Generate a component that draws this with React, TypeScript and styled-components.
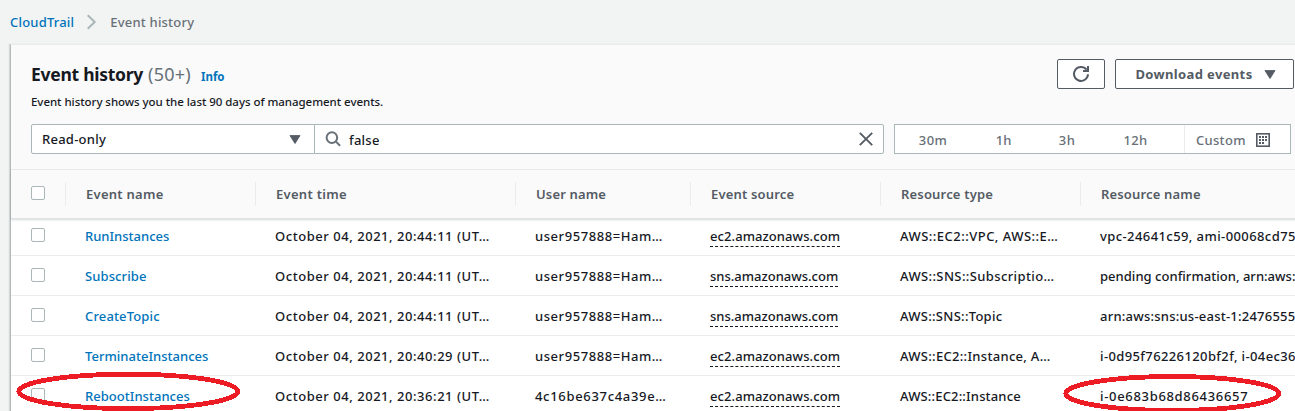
import React from "react";
import styled, { createGlobalStyle } from "styled-components";

const GlobalStyle = createGlobalStyle`
  *, *::before, *::after { box-sizing: border-box; }
  body {
    margin: 0;
    overflow: hidden;
    background: #f2f3f3;
    color: #16191f;
    font-family: "Noto Sans", "Open Sans", sans-serif;
    font-size: 13px;
    font-weight: 500;
  }
  button, input { font: inherit; color: inherit; }
`;

const Page = styled.div`
  position: relative;
  height: 411px;
  overflow: hidden;
  display: flex;
  flex-direction: column;
`;

/* Text with its own letter spacing */
const Text = styled.span<{ $track?: number }>`
  white-space: pre;
  letter-spacing: ${(p) => p.$track ?? 0}px;
`;

const Breadcrumbs = styled.nav`
  display: flex;
  align-items: center;
  height: 44px;
  padding: 0 0 1px 10px;
  color: #687078;
  flex: none;
  svg { margin: 0 13px 0 12px; }
`;

const Link = styled.a`
  color: #0073bb;
  text-decoration: none;
`;

const Panel = styled.main`
  flex: 1;
  margin-left: 10px;
  border-left: 1px solid #b4b9b9;
  border-top: 1px solid #eaeded;
  background: #fff;
  width: 1400px;
  box-shadow: -1px 0 1px rgba(0, 28, 36, 0.12);
`;

const PanelHeader = styled.header`
  height: 125px;
  padding: 14px 0 0 20px;
  background: #fafafa;
  border-bottom: 1px solid #eaeded;
`;

const TitleRow = styled.div`
  display: flex;
  width: 1263px;
  height: 35px;
`;

const Title = styled.h1`
  margin: 0;
  flex: 1;
  display: flex;
  align-items: baseline;
  font-size: 17.5px;
  line-height: 30px;
  font-weight: 700;
`;

const Count = styled.span`
  margin-left: 5px;
  font-size: 18px;
  font-weight: 400;
  letter-spacing: 0.25px;
  color: #687078;
`;

const Info = styled(Link)`
  margin-left: 10px;
  font-size: 11.5px;
  font-weight: 700;
`;

const Button = styled.button<{ $width: number }>`
  display: flex;
  align-items: center;
  justify-content: center;
  width: ${(p) => p.$width}px;
  height: 30px;
  margin-left: 10px;
  padding: 0;
  border: 1px solid #545b64;
  border-radius: 2px;
  background: #fff;
  color: #545b64;
  font-weight: 700;
  svg { flex: none; }
`;

const MenuButton = styled(Button)`
  gap: 11px;
  padding-left: 2px;
`;

const Description = styled.p`
  margin: 0;
  height: 30px;
  font-size: 11.5px;
  line-height: 15px;
`;

const Filters = styled.div`
  display: flex;
  height: 30px;
`;

const Field = styled.div<{ $width: number }>`
  display: flex;
  align-items: center;
  width: ${(p) => p.$width}px;
  border: 1px solid #aab7b8;
  background: #fff;
`;

const Select = styled(Field)`
  justify-content: space-between;
  padding: 0 13px 0 10px;
  border-radius: 2px 0 0 2px;
`;

const Search = styled(Field)`
  margin-left: -1px;
  padding: 0 10px 0 10px;
  border-radius: 0 2px 2px 0;
  svg { flex: none; }
`;

const SearchValue = styled(Text)`
  flex: 1;
  padding: 1px 0 0 8px;
`;

const Ranges = styled(Field)`
  margin-left: 10px;
  color: #687078;
  line-height: 28px;
`;

const Range = styled.div<{ $width: number }>`
  width: ${(p) => p.$width}px;
  padding-top: 1px;
  text-align: center;
`;

const Custom = styled.div`
  display: flex;
  align-items: center;
  gap: 10px;
  height: 28px;
  margin-left: 11px;
  padding: 1px 0 0 11px;
  border-left: 1px solid #eaeded;
`;

const columns = "54px 190px 260px 175px 190px 200px 310px";

const HeadRow = styled.div`
  position: relative;
  z-index: 1;
  display: grid;
  grid-template-columns: ${columns};
  align-items: center;
  height: 49px;
  background: #fafafa;
  border-bottom: 1px solid #dfe3e3;
  box-shadow: 0 1px 2px rgba(0, 28, 36, 0.16);
`;

const HeadCell = styled.div`
  height: 24px;
  padding-left: 20px;
  border-left: 1px solid #eaeded;
  color: #545b64;
  font-weight: 600;
  line-height: 24px;
`;

const Body = styled.div`
  margin-top: -3px;
`;

const Row = styled.div`
  display: grid;
  grid-template-columns: ${columns};
  align-items: center;
  height: 40px;
  border-bottom: 1px solid #eaeded;
`;

const Cell = styled.div`
  height: 21px;
  padding-left: 20px;
  line-height: 20px;
  padding-top: 1px;
`;

const HeadCheck = styled.div`
  padding: 0 0 2px 20px;
`;

const CheckCell = styled(HeadCheck)`
  padding-bottom: 1px;
`;

const Checkbox = styled.div`
  width: 14px;
  height: 14px;
  border: 1px solid #aab7b8;
  border-radius: 2px;
  background: #fff;
`;

const Source = styled(Text)`
  display: inline-block;
  height: 21px;
  line-height: 20px;
  border-bottom: 1px dashed #16191f;
  vertical-align: top;
`;

const Marks = styled.svg`
  position: absolute;
  inset: 0;
  z-index: 2;
  pointer-events: none;
`;

const Caret = () => (
  <svg width="12" height="9" viewBox="0 0 12 9">
    <path d="M1 .6h10L6 8.5z" fill="#545b64" stroke="#545b64" strokeWidth=".9" strokeLinejoin="round" />
  </svg>
);

const Crumb = () => (
  <svg width="11" height="16" viewBox="0 0 11 16" fill="none" stroke="#aab7b8" strokeWidth="2">
    <path d="M1.7 1.2 8.7 8l-7 6.8" />
  </svg>
);

const Refresh = () => (
  <svg width="18" height="18" viewBox="0 0 18 18" fill="none" stroke="#545b64" strokeWidth="2">
    <path d="M16 9.3A7 7 0 1 1 14.6 4.7" />
    <path d="M16 1v5h-5" />
  </svg>
);

const Magnifier = () => (
  <svg width="16" height="16" viewBox="0 0 16 16" fill="none" stroke="#687078" strokeWidth="2">
    <circle cx="6.9" cy="6.6" r="5.3" />
    <path d="m10.7 10.4 4.4 4.3" />
  </svg>
);

const Clear = () => (
  <svg width="14" height="14" viewBox="0 0 14 14" fill="none" stroke="#545b64" strokeWidth="1.9">
    <path d="m.8.8 12.4 12.4M13.2.8.8 13.2" />
  </svg>
);

const Calendar = () => (
  <svg width="14" height="14" viewBox="0 0 14 14">
    <rect x=".8" y=".8" width="12.4" height="12.4" fill="#fff" stroke="#545b64" strokeWidth="1.6" />
    <g fill="#545b64">
      {[3, 6, 9].map((y) =>
        [3, 6, 9].map((x) =>
          x === 9 && y === 9 ? null : <rect key={`${x}-${y}`} x={x} y={y} width="2" height="2" />
        )
      )}
    </g>
  </svg>
);

type T = [string, number];

const heads: T[] = [
  ["Event name", 0.26],
  ["Event time", 0.3],
  ["User name", 0.15],
  ["Event source", 0.18],
  ["Resource type", 0.18],
  ["Resource name", 0.16],
];

const ec2: T = ["ec2.amazonaws.com", 0.08];
const sns: T = ["sns.amazonaws.com", 0];
const user: T = ["user957888=Ham…", 0.56];

const rows: { name: T; time: string; user: T; source: T; type: T; resource: T }[] = [
  { name: ["RunInstances", 0], time: "20:44:11", user, source: ec2, type: ["AWS::EC2::VPC, AWS::E…", 0.48], resource: ["vpc-24641c59, ami-00068cd75", 0.41] },
  { name: ["Subscribe", 0.1], time: "20:44:11", user, source: sns, type: ["AWS::SNS::Subscriptio…", 0.38], resource: ["pending confirmation, arn:aws:", 0.03] },
  { name: ["CreateTopic", 0.15], time: "20:44:11", user, source: sns, type: ["AWS::SNS::Topic", 0.28], resource: ["arn:aws:sns:us-east-1:2476555", 0.23] },
  { name: ["TerminateInstances", 0.02], time: "20:40:29", user, source: ec2, type: ["AWS::EC2::Instance, A…", 0.3], resource: ["i-0d95f76226120bf2f, i-04ec36", 0.38] },
  { name: ["RebootInstances", 0.03], time: "20:36:21", user: ["4c16be637c4a39e…", 0.68], source: ec2, type: ["AWS::EC2::Instance", 0.16], resource: ["i-0e683b68d86436657", 0.68] },
];

const Spaced = ({ value }: { value: T }) => <Text $track={value[1]}>{value[0]}</Text>;

export default function App() {
  return (
    <Page>
      <GlobalStyle />
      <Breadcrumbs>
        <Link href="#"><Text $track={0.2}>CloudTrail</Text></Link>
        <Crumb />
        <Text $track={0.2}>Event history</Text>
      </Breadcrumbs>
      <Panel>
        <PanelHeader>
          <TitleRow>
            <Title>
              <Text $track={-0.27}>Event history</Text>
              <Count>(50+)</Count>
              <Info href="#">Info</Info>
            </Title>
            <Button $width={48} aria-label="Refresh"><Refresh /></Button>
            <MenuButton $width={179}>
              <Text $track={0.36}>Download events</Text>
              <Caret />
            </MenuButton>
          </TitleRow>
          <Description><Text $track={-0.04}>Event history shows you the last 90 days of management events.</Text></Description>
          <Filters>
            <Select $width={284}><Text $track={0.25}>Read-only</Text><Caret /></Select>
            <Search $width={570}>
              <Magnifier />
              <SearchValue $track={0.25}>false</SearchValue>
              <Clear />
            </Search>
            <Ranges $width={397}>
              <Range $width={76}><Text $track={0.4}>30m</Text></Range>
              <Range $width={65}>1h</Range>
              <Range $width={62}><Text $track={0.5}>3h</Text></Range>
              <Range $width={75}><Text $track={0.4}>12h</Text></Range>
              <Custom><Text $track={0.3}>Custom</Text><Calendar /></Custom>
            </Ranges>
          </Filters>
        </PanelHeader>
        <HeadRow>
          <HeadCheck><Checkbox /></HeadCheck>
          {heads.map((h) => <HeadCell key={h[0]}><Spaced value={h} /></HeadCell>)}
        </HeadRow>
        <Body>
          {rows.map((r) => (
            <Row key={r.name[0]}>
              <CheckCell><Checkbox /></CheckCell>
              <Cell><Link href="#"><Spaced value={r.name} /></Link></Cell>
              <Cell><Text $track={0.54}>{`October 04, 2021, ${r.time} (UT…`}</Text></Cell>
              <Cell><Spaced value={r.user} /></Cell>
              <Cell><Source $track={r.source[1]}>{r.source[0]}</Source></Cell>
              <Cell><Spaced value={r.type} /></Cell>
              <Cell><Spaced value={r.resource} /></Cell>
            </Row>
          ))}
        </Body>
      </Panel>
      <Marks width="1295" height="411" fill="none" stroke="#ed1c24" strokeWidth="4.8" shapeRendering="crispEdges">
        <ellipse cx="128.3" cy="391.4" rx="109.5" ry="17.2" />
        <ellipse cx="1172.3" cy="393.5" rx="106.5" ry="17" />
      </Marks>
    </Page>
  );
}
